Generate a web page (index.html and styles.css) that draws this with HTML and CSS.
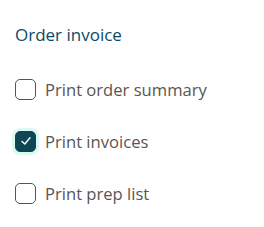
FILE: index.html
```html
<!DOCTYPE html>
<html lang="en">

<head>
    <meta charset="UTF-8">
    <meta name="viewport" content="width=device-width, initial-scale=1.0">
    <title>Order invoice</title>
    <link rel="stylesheet" href="styles.css">
</head>

<body>
    <div class="panel">
        <h3>Order invoice</h3>
        <label class="option">
            <input type="checkbox">
            <span class="box"></span>
            <span class="text">Print order summary</span>
        </label>
        <label class="option">
            <input type="checkbox" checked>
            <span class="box focus">
                <svg viewBox="0 0 14 14" width="14" height="14"><path d="M3 7.4 L5.8 10 L11 3.8" fill="none" stroke="#fff" stroke-width="1.4" stroke-linecap="round" stroke-linejoin="round"/></svg>
            </span>
            <span class="text">Print invoices</span>
        </label>
        <label class="option">
            <input type="checkbox">
            <span class="box"></span>
            <span class="text">Print prep list</span>
        </label>
    </div>
</body>

</html>
```

FILE: styles.css
```css
* {
    margin: 0;
    padding: 0;
    box-sizing: border-box;
    font-family: "Open Sans", sans-serif;
}

body {
    background: #fff;
}

.panel {
    padding: 23px 15px 0;
    display: flex;
    flex-direction: column;
}

.panel h3 {
    font-size: 17px;
    font-weight: 500;
    color: #0b4a66;
    line-height: 24px;
    margin-bottom: 16px;
}

.option {
    display: flex;
    align-items: center;
    gap: 9px;
    height: 52px;
    cursor: pointer;
}

.option input {
    display: none;
}

.option .box {
    width: 21px;
    height: 21px;
    border: 1.5px solid #2d6470;
    border-radius: 5px;
    display: flex;
    align-items: center;
    justify-content: center;
    flex-shrink: 0;
}

.option input:checked + .box {
    background: #0e4753;
    border-color: #0e4753;
}

.option .box.focus {
    box-shadow: 0 0 0 3px #dcf8f3;
}

.option .text {
    font-size: 16.6px;
    color: #5b5551;
}
```
